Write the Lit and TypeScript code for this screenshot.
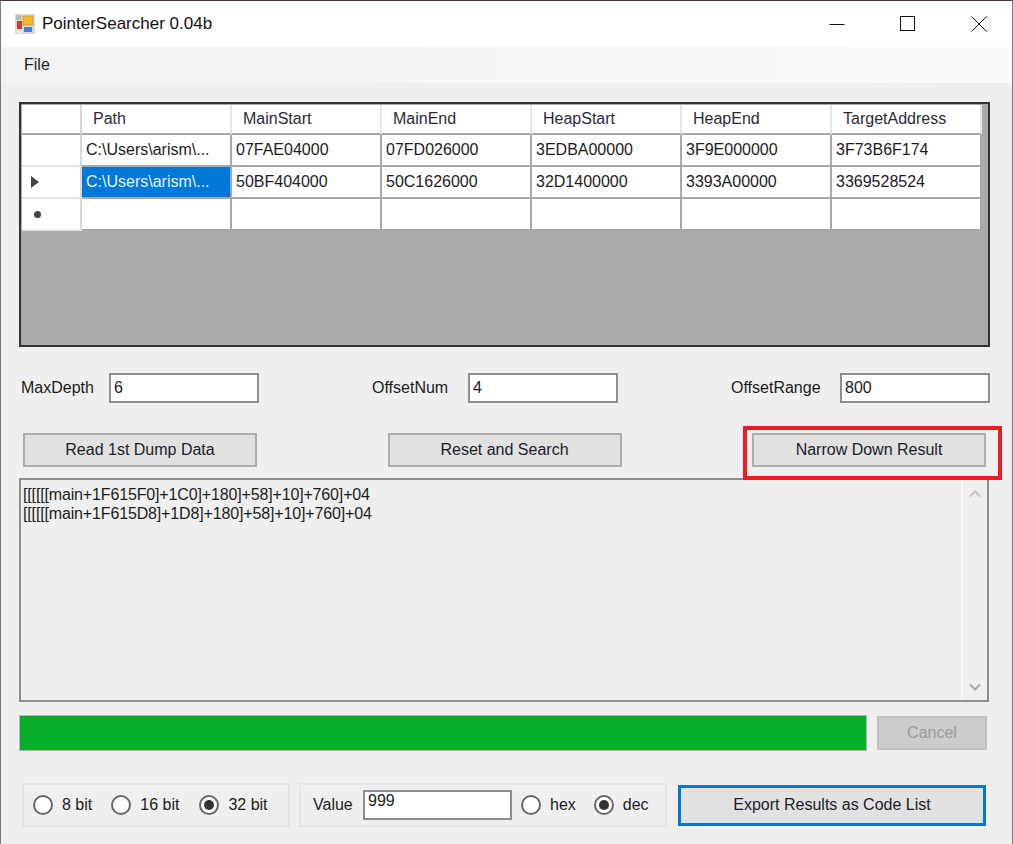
import { LitElement, html, css } from "lit";
import { customElement } from "lit/decorators.js";

const columns = ["Path", "MainStart", "MainEnd", "HeapStart", "HeapEnd", "TargetAddress"];

const rows = [
  { marker: "", cells: ["C:\\Users\\arism\\...", "07FAE04000", "07FD026000", "3EDBA00000", "3F9E000000", "3F73B6F174"] },
  { marker: "current", cells: ["C:\\Users\\arism\\...", "50BF404000", "50C1626000", "32D1400000", "3393A00000", "3369528524"] },
  { marker: "new", cells: ["", "", "", "", "", ""] },
];

@customElement("app-root")
export class AppRoot extends LitElement {
  radio(label: string, checked: boolean, gap: number) {
    return html`
      <span class="radio" style="margin-right: ${gap}px">
        <span class="dot ${checked ? "checked" : ""}"></span>
        <span>${label}</span>
      </span>
    `;
  }

  field(label: string, value: string, labelWidth: number) {
    return html`
      <div class="field">
        <span class="field-label" style="width: ${labelWidth}px">${label}</span>
        <div class="input">${value}</div>
      </div>
    `;
  }

  render() {
    return html`
      <div class="window">
        <div class="titlebar">
          <svg class="app-icon" width="20" height="20" viewBox="0 0 20 20">
            <rect x="0" y="0" width="20" height="20" fill="#d9d9d9" />
            <rect x="1" y="1" width="5" height="5" fill="#b8b8b8" />
            <rect x="2" y="7" width="5" height="8" fill="#d23a2c" />
            <rect x="8" y="2" width="10" height="9" fill="#f5b921" stroke="#b98a15" stroke-width="0.6" />
            <rect x="9" y="13" width="8" height="5" fill="#4a80d0" />
            <rect x="2" y="16" width="5" height="3" fill="#ededed" />
          </svg>
          <span class="title">PointerSearcher 0.04b</span>
          <div class="controls">
            <svg width="16" height="16" viewBox="0 0 16 16"><path d="M0.5 8.5H15.5" stroke="#111" fill="none" /></svg>
            <svg width="16" height="16" viewBox="0 0 16 16"><rect x="0.5" y="0.5" width="14" height="14" stroke="#111" fill="none" /></svg>
            <svg width="16" height="16" viewBox="0 0 16 16"><path d="M0.5 0.5L15.5 15.5M15.5 0.5L0.5 15.5" stroke="#111" fill="none" /></svg>
          </div>
        </div>
        <div class="menubar"><span>File</span></div>

        <div class="content">
          <div class="grid-view">
            <div class="table">
              <div class="corner"></div>
              ${columns.map((c) => html`<div class="head">${c}</div>`)}
              ${rows.map(
                (r) => html`
                  <div class="row-head">
                    ${r.marker === "current"
                      ? html`<svg width="8" height="12" viewBox="0 0 8 12"><path d="M0 0L8 6L0 12Z" fill="#444" /></svg>`
                      : ""}
                    ${r.marker === "new" ? html`<span class="star"></span>` : ""}
                  </div>
                  ${r.cells.map(
                    (c, i) => html`<div class="cell ${r.marker === "current" && i === 0 ? "selected" : ""}">${c}</div>`
                  )}
                `
              )}
            </div>
          </div>

          <div class="fields">
            ${this.field("MaxDepth", "6", 88)}
            ${this.field("OffsetNum", "4", 96)}
            ${this.field("OffsetRange", "800", 109)}
          </div>

          <div class="buttons">
            <button class="btn">Read 1st Dump Data</button>
            <button class="btn">Reset and Search</button>
            <div class="highlighted">
              <button class="btn">Narrow Down Result</button>
              <div class="red-box"></div>
            </div>
          </div>

          <div class="output">
            <div class="output-text">
              [[[[[[main+1F615F0]+1C0]+180]+58]+10]+760]+04<br />
              [[[[[[main+1F615D8]+1D8]+180]+58]+10]+760]+04
            </div>
            <div class="scrollbar">
              <svg width="12" height="8" viewBox="0 0 12 8"><path d="M1 6.5L6 1.5L11 6.5" stroke="#c4c4c4" stroke-width="2" fill="none" /></svg>
              <svg width="12" height="8" viewBox="0 0 12 8"><path d="M1 1.5L6 6.5L11 1.5" stroke="#a8a8a8" stroke-width="2" fill="none" /></svg>
            </div>
          </div>

          <div class="progress-row">
            <div class="progress"></div>
            <button class="btn cancel" disabled>Cancel</button>
          </div>

          <div class="bottom">
            <div class="group bits">
              ${this.radio("8 bit", false, 19)}
              ${this.radio("16 bit", false, 20)}
              ${this.radio("32 bit", true, 0)}
            </div>
            <div class="group value">
              <span class="value-label">Value</span>
              <div class="input small">999</div>
              ${this.radio("hex", false, 18)}
              ${this.radio("dec", true, 0)}
            </div>
            <button class="btn export">Export Results as Code List</button>
          </div>
        </div>
      </div>
    `;
  }

  static styles = css`
    :host {
      display: block;
      width: 1013px;
      height: 844px;
      font-family: "Liberation Sans", Arial, sans-serif;
      font-size: 16px;
      color: #1c1c1c;
    }
    .window {
      box-sizing: border-box;
      width: 1013px;
      height: 844px;
      background: #efefef;
      border-top: 1px solid #4a3a3a;
      border-left: 1px solid #7a7a7a;
      border-right: 1px solid #7a7a7a;
      overflow: hidden;
    }
    .titlebar {
      height: 46px;
      background: #fff;
      display: flex;
      align-items: center;
      box-sizing: border-box;
      padding-left: 14px;
    }
    .title {
      margin-left: 7px;
      font-size: 17px;
      color: #111;
    }
    .controls {
      margin-left: auto;
      margin-right: 25px;
      display: flex;
      gap: 55px;
    }
    .menubar {
      height: 36px;
      background: linear-gradient(90deg, #f2f2f2, #fafafa);
      display: flex;
      align-items: center;
      padding-left: 23px;
    }
    .content {
      padding: 19px 0 0 18px;
    }
    .grid-view {
      box-sizing: border-box;
      width: 971px;
      height: 245px;
      background: #ababab;
      border: 2px solid #333;
      padding: 1px 0 0 1px;
    }
    .table {
      display: grid;
      grid-template-columns: 60px repeat(6, 150px);
      grid-template-rows: 30px 32px 32px 32px;
    }
    .corner,
    .head,
    .row-head,
    .cell {
      box-sizing: border-box;
      background: #fff;
      border-right: 2px solid #a8a8a8;
      border-bottom: 2px solid #a8a8a8;
      display: flex;
      align-items: center;
      white-space: nowrap;
      overflow: hidden;
    }
    .head {
      padding-left: 11px;
      border-right-color: #e4e4e4;
      border-bottom-color: #a8a8a8;
      color: #2a2a3a;
    }
    .corner {
      border-right-color: #d8d8d8;
    }
    .row-head {
      border-right-color: #d8d8d8;
      border-bottom-color: #e4e4e4;
      padding-left: 9px;
    }
    .star {
      width: 7px;
      height: 7px;
      border-radius: 50%;
      background: #444;
      margin-left: 3px;
    }
    .cell {
      padding-left: 4px;
    }
    .cell.selected {
      background: #0078d7;
      color: #e4f1fb;
    }
    .fields {
      display: flex;
      justify-content: space-between;
      width: 969px;
      margin: 26px 0 0 2px;
    }
    .field {
      display: flex;
      align-items: center;
    }
    .field-label {
      display: block;
    }
    .input {
      box-sizing: border-box;
      width: 150px;
      height: 30px;
      background: #fff;
      border: 2px solid #8e8e8e;
      padding-left: 3px;
      display: flex;
      align-items: center;
      color: #1c1c1c;
    }
    .buttons {
      display: flex;
      justify-content: space-between;
      width: 963px;
      margin: 30px 0 0 4px;
    }
    .btn {
      box-sizing: border-box;
      width: 234px;
      height: 34px;
      background: #e1e1e1;
      border: 2px solid #adadad;
      padding: 0;
      font: inherit;
      color: #1c1c2c;
    }
    .highlighted {
      position: relative;
      display: flex;
    }
    .red-box {
      position: absolute;
      left: -9px;
      top: -7px;
      width: 259px;
      height: 54px;
      box-sizing: border-box;
      border: 4px solid #ed1c24;
    }
    .output {
      box-sizing: border-box;
      display: flex;
      width: 970px;
      height: 224px;
      margin-top: 11px;
      border: 2px solid #8e8e8e;
      border-right-width: 2px;
    }
    .output-text {
      flex: 1;
      padding: 5px 0 0 2px;
      line-height: 19px;
      letter-spacing: -0.15px;
    }
    .scrollbar {
      width: 26px;
      box-sizing: border-box;
      border-left: 2px solid #f6f6f6;
      display: flex;
      flex-direction: column;
      justify-content: space-between;
      align-items: center;
      padding: 10px 0 9px;
    }
    .progress-row {
      display: flex;
      align-items: center;
      margin-top: 13px;
    }
    .progress {
      box-sizing: border-box;
      width: 848px;
      height: 36px;
      background: #06ae28;
      border: 1px solid #b6b6b6;
    }
    .cancel {
      width: 110px;
      height: 34px;
      margin-left: 10px;
      background: #cccccc;
      border: 2px solid #c0c0c0;
      color: #9a9a9a;
    }
    .bottom {
      display: flex;
      align-items: center;
      margin: 32px 0 0 3px;
    }
    .group {
      box-sizing: border-box;
      height: 44px;
      border: 2px solid #e4e4e4;
      display: flex;
      align-items: center;
    }
    .bits {
      width: 268px;
      padding-left: 9px;
    }
    .value {
      width: 368px;
      margin-left: 9px;
      padding-left: 12px;
    }
    .value-label {
      width: 50px;
    }
    .input.small {
      width: 149px;
      height: 30px;
      margin-right: 9px;
      align-items: flex-start;
    }
    .radio {
      display: inline-flex;
      align-items: center;
      gap: 9px;
    }
    .dot {
      box-sizing: border-box;
      width: 20px;
      height: 20px;
      border-radius: 50%;
      border: 2px solid #666;
      background: #fff;
      display: flex;
      align-items: center;
      justify-content: center;
    }
    .dot.checked::after {
      content: "";
      width: 10px;
      height: 10px;
      border-radius: 50%;
      background: #333;
    }
    .export {
      width: 308px;
      height: 41px;
      margin-left: 11px;
      border: 3px solid #0078d7;
    }
  `;
}
